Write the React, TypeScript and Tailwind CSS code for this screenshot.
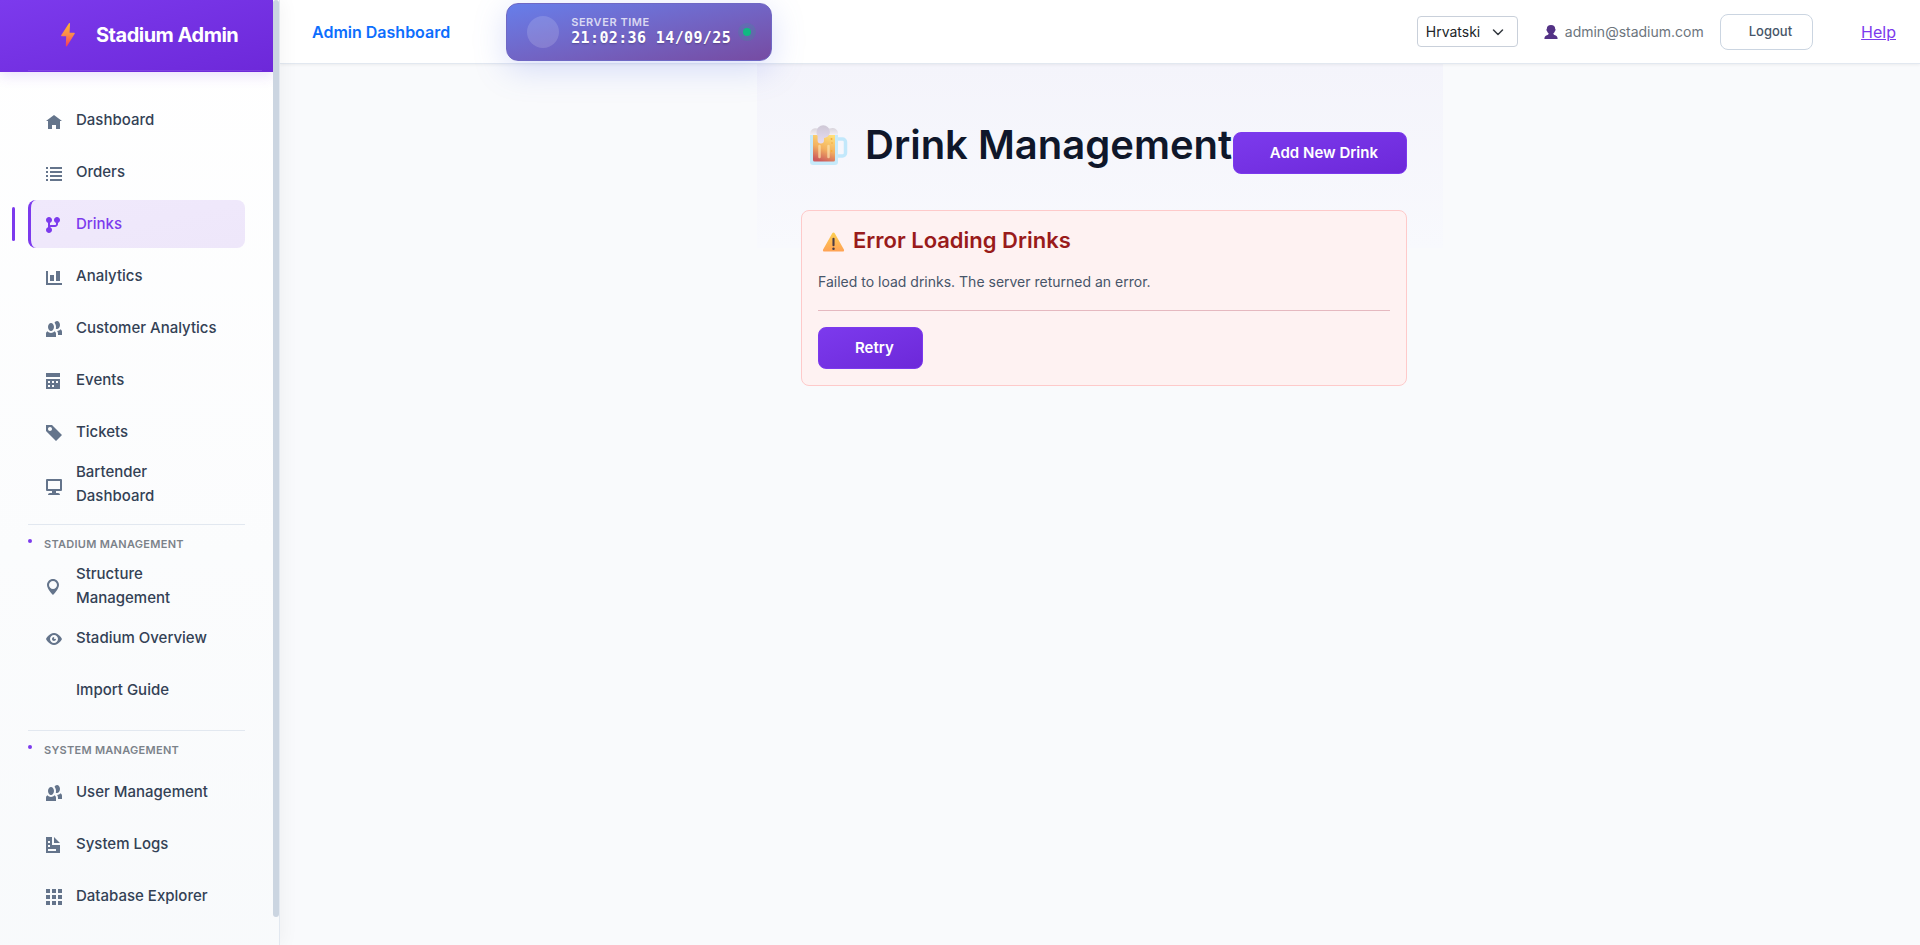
import React from "react";

const icons: Record<string, string> = {
  home: "M4 1l-4 3h1v4h2v-2h2v2h2v-4h1z",
  list: "M0 1h1v1h-1zM2 1h6v1h-6zM0 3h1v1h-1zM2 3h6v1h-6zM0 5h1v1h-1zM2 5h6v1h-6zM0 7h1v1h-1zM2 7h6v1h-6z",
  fork: "M1.500 0c-.83 0-1.500.67-1.500 1.500 0 .66.41 1.200 1 1.410v2.190c-.59.200-1 .75-1 1.410 0 .83.67 1.500 1.500 1.500s1.500-.67 1.500-1.500c0-.6-.34-1.100-.84-1.340.09-.09.210-.160.340-.160h2c.82 0 1.500-.68 1.500-1.500v-.590c.59-.2 1-.75 1-1.410 0-.83-.67-1.500-1.500-1.500s-1.500.67-1.500 1.500c0 .66.41 1.200 1 1.410v.59c0 .28-.22.500-.5.500h-2c-.17 0-.35.040-.5.090v-1.190c.59-.2 1-.75 1-1.410 0-.83-.67-1.500-1.500-1.500z",
  chart: "M0 1v7h8v-1h-7v-6zM5 1v5h2v-5zM2 3v3h2v-3z",
  people:
    "M5.500 0c-.51 0-.95.350-1.220.880.45.54.72 1.280.720 2.130 0 .29-.03.550-.09.810.19.110.380.190.59.190.83 0 1.500-.9 1.500-2s-.67-2-1.500-2zm-3 1c-.83 0-1.500.9-1.500 2s.67 2 1.500 2 1.500-.9 1.500-2-.67-2-1.500-2zm4.750 3.160c-.43.51-1.020.820-1.690.840.270.38.440.840.440 1.340v.660h2v-1.660c0-.52-.31-.970-.75-1.190zm-6.500 1c-.44.22-.75.660-.75 1.190v1.660h5v-1.660c0-.52-.31-.97-.75-1.190-.45.53-1.060.840-1.750.840s-1.300-.32-1.750-.84z",
  calendar:
    "M0 0v2h7v-2h-7zm0 3v4.910c0 .05.040.090.090.090h6.810c.05 0 .09-.04.090-.090v-4.910h-7zm1 1h1v1h-1v-1zm2 0h1v1h-1v-1zm2 0h1v1h-1v-1zm-4 2h1v1h-1v-1zm2 0h1v1h-1v-1z",
  tag: "M0 0v3l5 5 3-3-5-5h-3zm2 1c.55 0 1 .45 1 1s-.45 1-1 1-1-.45-1-1 .45-1 1-1z",
  monitor:
    "M.5 1a.5.5 0 0 0-.5.5v5a.5.5 0 0 0 .5.5h2.500v1h-1c-.55 0-1 .45-1 1h6c0-.55-.45-1-1-1h-1v-1h2.500a.5.5 0 0 0 .5-.5v-5a.5.5 0 0 0-.5-.5zM1 2h6v4h-6z",
  marker:
    "M3.500 0c-1.660 0-3 1.340-3 3 0 2 3 5 3 5s3-3 3-5c0-1.660-1.340-3-3-3zm0 1c1.110 0 2 .9 2 2 0 1.110-.89 2-2 2-1.100 0-2-.89-2-2 0-1.100.9-2 2-2z",
  eye: "M4.030 1c-2.530 0-4.030 3-4.030 3s1.500 3 4.030 3c2.470 0 3.970-3 3.970-3s-1.500-3-3.970-3zm-.03 1c1.110 0 2 .9 2 2 0 1.110-.89 2-2 2-1.100 0-2-.89-2-2 0-1.100.9-2 2-2zm0 1c-.55 0-1 .45-1 1s.45 1 1 1 1-.45 1-1c0-.1-.04-.19-.06-.28-.08.160-.24.280-.44.280-.28 0-.5-.22-.5-.5 0-.2.120-.36.280-.44-.09-.03-.18-.06-.28-.06z",
  document:
    "M0 0v8h7v-4h-4v-4h-3zm4 0v3h3l-3-3zm-3 2h1v1h-1v-1zm0 2h1v1h-1v-1zm0 2h4v1h-4v-1z",
  grid: "M0 0h2v2h-2zM3 0h2v2h-2zM6 0h2v2h-2zM0 3h2v2h-2zM3 3h2v2h-2zM6 3h2v2h-2zM0 6h2v2h-2zM3 6h2v2h-2zM6 6h2v2h-2z",
};

type Item = { label: string; icon?: string; active?: boolean };
type Section = { title?: string; items: Item[] };

const sections: Section[] = [
  {
    items: [
      { label: "Dashboard", icon: "home" },
      { label: "Orders", icon: "list" },
      { label: "Drinks", icon: "fork", active: true },
      { label: "Analytics", icon: "chart" },
      { label: "Customer Analytics", icon: "people" },
      { label: "Events", icon: "calendar" },
      { label: "Tickets", icon: "tag" },
      { label: "Bartender Dashboard", icon: "monitor" },
    ],
  },
  {
    title: "Stadium Management",
    items: [
      { label: "Structure Management", icon: "marker" },
      { label: "Stadium Overview", icon: "eye" },
      { label: "Import Guide" },
    ],
  },
  {
    title: "System Management",
    items: [
      { label: "User Management", icon: "people" },
      { label: "System Logs", icon: "document" },
      { label: "Database Explorer", icon: "grid" },
    ],
  },
];

function NavItem({ label, icon, active }: Item) {
  return (
    <li className="relative">
      {active && <span className="absolute top-[7px] -left-4 h-[34px] w-[3px] rounded-sm bg-[#7c3aed]" />}
      <a
        href="#"
        aria-current={active ? "page" : undefined}
        className={
          active
            ? "flex min-h-12 items-center gap-3.5 rounded-lg border-l-3 border-[#7c3aed] bg-linear-to-br from-[#f0e9fc] to-[#eee7fa] pr-4 pl-[15px] text-[#7c3aed]"
            : "flex min-h-12 items-center gap-3.5 rounded-lg border-l-3 border-transparent pr-4 pl-[15px] text-[#334155]"
        }
      >
        <svg
          viewBox="0 0 8 8"
          aria-hidden="true"
          className={
            active
              ? "mt-0.5 size-4 shrink-0 overflow-visible fill-[#7c3aed]"
              : "mt-0.5 size-4 shrink-0 overflow-visible fill-[#64748b]"
          }
        >
          {icon && <path d={icons[icon]} fillRule="evenodd" />}
        </svg>
        <span className="text-[15px] leading-6 font-medium">{label}</span>
      </a>
    </li>
  );
}

function Bolt() {
  return (
    <svg viewBox="0 0 16 24" className="h-6 w-4" aria-hidden="true">
      <defs>
        <linearGradient id="bolt" x1="0" y1="0" x2="0" y2="1">
          <stop offset="0" stopColor="#fdb92e" />
          <stop offset="0.5" stopColor="#fb8a4b" />
          <stop offset="1" stopColor="#f4395c" />
        </linearGradient>
      </defs>
      <path
        d="M8.800 .4L1.200 12.200c-.3.500 0 1 .5 1h4.500L5.800 22.700c0 .8.900 1 1.300.4L14.700 10.800c.3-.5 0-1-.5-1H9.600L10 .900C10.100 0 9.200-.2 8.800 .4z"
        fill="url(#bolt)"
      />
    </svg>
  );
}

function Beer() {
  return (
    <svg viewBox="0 0 40 42" className="h-[42px] w-10 shrink-0" aria-hidden="true">
      <defs>
        <linearGradient id="ale" x1="0.7" y1="0" x2="0.4" y2="1">
          <stop offset="0" stopColor="#ffe07a" />
          <stop offset="0.55" stopColor="#f3b060" />
          <stop offset="1" stopColor="#cc5a5c" />
        </linearGradient>
        <linearGradient id="foam" x1="0" y1="0" x2="0" y2="1">
          <stop offset="0" stopColor="#cfc8d6" />
          <stop offset="1" stopColor="#e6dcf2" />
        </linearGradient>
        <linearGradient id="froth" x1="0" y1="0" x2="0" y2="1">
          <stop offset="0" stopColor="#d9d4dc" />
          <stop offset="1" stopColor="#f4f0f4" />
        </linearGradient>
      </defs>
      <path d="M28 15h5.500a3 3 0 0 1 3 3v11a3 3 0 0 1-3 3H28" fill="none" stroke="#c2e8fb" strokeWidth="3.500" />
      <path d="M1 10h28v28a3 3 0 0 1-3 3H4a3 3 0 0 1-3-3z" fill="#c6eafa" />
      <path d="M4 10h22v26a1.500 1.500 0 0 1-1.500 1.500h-19A1.500 1.500 0 0 1 4 36z" fill="url(#ale)" />
      <path d="M10.500 22v11M19.500 22v11" stroke="#fde3b0" strokeWidth="2.500" strokeLinecap="round" opacity=".7" />
      <circle cx="22.500" cy="15" r="1" fill="#f3aa3c" />
      <circle cx="22.500" cy="27" r="1" fill="#f3aa3c" />
      <circle cx="23" cy="19" r=".8" fill="#f3aa3c" />
      <path d="M1 11V9.500a5.500 5.500 0 0 1 7-5h13a5.500 5.500 0 0 1 8 5V11z" fill="url(#froth)" />
      <path d="M7.500 8a6.700 6.700 0 0 1 13.400 0c0 3-2.400 5.500-5.900 6v2.200a3.200 3.200 0 0 1-6.400 0V12c-.7-1-1.100-2.500-1.100-4z" fill="url(#foam)" />
    </svg>
  );
}

function Warning() {
  return (
    <svg viewBox="0 0 24 21" className="mt-0.5 h-5 w-[23px] shrink-0" aria-hidden="true">
      <defs>
        <linearGradient id="warn" x1="0" y1="0" x2="0" y2="1">
          <stop offset="0" stopColor="#fccf52" />
          <stop offset="1" stopColor="#ffa254" />
        </linearGradient>
      </defs>
      <path
        d="M10.700 1.200a1.500 1.500 0 0 1 2.600 0l9.600 17.300a1.300 1.300 0 0 1-1.200 2H2.300a1.300 1.300 0 0 1-1.200-2z"
        fill="url(#warn)"
      />
      <rect x="10.900" y="6" width="2.200" height="9" rx="1.100" fill="#4a3b45" />
      <circle cx="12" cy="17.500" r="1.300" fill="#4a3b45" />
    </svg>
  );
}

function UserGlyph() {
  return (
    <svg viewBox="0 0 14 14" className="size-3.5" aria-hidden="true">
      <path
        d="M7 0c2.700 0 4.200 1.600 4.200 4 .6.200.5 1.700-.2 1.900-.3 1.200-1 2-1.700 2.600.1.900.7 1.400 1.800 1.700 1.600.5 2.500 1.500 2.500 3.800H.4c0-2.300.9-3.300 2.500-3.800 1.100-.3 1.700-.8 1.800-1.700C4 7.900 3.300 7.100 3 5.900c-.7-.2-.8-1.700-.2-1.900C2.800 1.600 4.300 0 7 0z"
        fill="#533285"
      />
    </svg>
  );
}

const primary =
  "flex h-[42px] items-center rounded-lg border border-[#7c3aed] bg-linear-to-br from-[#7c3aed] to-[#6d28d9] pr-7 pl-9 text-[15px] font-semibold text-white";

export default function App() {
  return (
    <div className="flex min-h-screen bg-[#f9fafc] font-['Inter',sans-serif] text-slate-900">
      <aside className="sticky top-0 z-10 flex h-screen w-[280px] shrink-0 border-r border-slate-200 bg-linear-to-b from-white to-slate-50 shadow-[4px_0_16px_rgba(0,0,0,0.04)]">
        <div className="min-w-0 flex-1 overflow-hidden">
          <div className="flex h-[72px] flex-col bg-linear-to-br from-[#7c3aed] to-[#6d28d9] pr-[11px] pl-7 shadow-[0_4px_12px_rgba(124,58,237,0.15)]">
            <a href="#" className="flex flex-1 items-center gap-5 pl-8 text-xl font-bold tracking-tight text-white">
              <Bolt />
              Stadium Admin
            </a>
            <div className="mb-px h-px bg-white/10" />
          </div>
          <nav className="px-7 pt-6">
            {sections.map((section, i) => (
              <div key={i}>
                {section.title && (
                  <div className="mt-4 flex h-[38px] gap-3 border-t border-slate-200">
                    <span className="mt-3.5 size-1 rounded-full bg-[#7c3aed]" />
                    <h2 className="pt-[11px] text-[11px] leading-4 font-semibold tracking-wide text-[#7b828a] uppercase">
                      {section.title}
                    </h2>
                  </div>
                )}
                <ul className="flex flex-col gap-1">
                  {section.items.map((item) => (
                    <NavItem key={item.label} {...item} />
                  ))}
                </ul>
              </div>
            ))}
          </nav>
        </div>
        <div className="w-1.5 shrink-0" aria-hidden="true">
          <div className="h-[97%] rounded-full bg-[#cbd5e1]" />
        </div>
      </aside>

      <div className="flex min-w-0 flex-1 flex-col">
        <header className="z-[5] flex h-16 items-center justify-between border-b border-slate-200 bg-white pr-6 pl-8 shadow-[0_1px_3px_rgba(0,0,0,0.06)]">
          <div className="flex items-center gap-14">
            <a href="#" className="text-base font-semibold text-[#0d6efd]">
              Admin Dashboard
            </a>
            <div className="flex h-[58px] items-center rounded-xl border border-[#6f68c4] bg-linear-to-br from-[#667eea] to-[#764ba2] px-5 text-white shadow-[0_8px_32px_rgba(102,126,234,0.25)]">
              <span className="size-8 rounded-full bg-white/15" />
              <div className="pb-1 pl-3">
                <div className="text-[11px] leading-4 font-semibold tracking-wider text-white/75">SERVER TIME</div>
                <div className="font-['DejaVu_Sans_Mono',monospace] text-[15px] leading-4 font-bold tracking-wide text-shadow-sm">
                  21:02:36 14/09/25
                </div>
              </div>
              <span className="ml-3 size-2 rounded-full bg-[#10b981] ring-5 ring-[#10b981]/15" />
            </div>
          </div>
          <div className="flex items-center">
            <div className="relative">
              <select
                aria-label="Language"
                className="h-[31px] w-[101px] appearance-none rounded border border-[#c9d0da] bg-white px-2 text-sm text-[#212529]"
              >
                <option>Hrvatski</option>
              </select>
              <svg
                viewBox="0 0 12 12"
                className="pointer-events-none absolute top-2.5 right-3.5 size-3"
                aria-hidden="true"
              >
                <path
                  d="M1.500 4L6 8.500 10.500 4"
                  fill="none"
                  stroke="#343a40"
                  strokeWidth="1.500"
                  strokeLinecap="round"
                  strokeLinejoin="round"
                />
              </svg>
            </div>
            <div className="ml-[26px] flex items-center gap-[7px] text-sm text-[#6c757d]">
              <UserGlyph />
              admin@stadium.com
            </div>
            <button className="ml-4 h-9 rounded-lg border border-[#cbd5e1] bg-white pr-5 pl-7 text-[13px] font-medium text-[#475569]">
              Logout
            </button>
            <a href="#" className="ml-12 text-base text-[#7c3aed] underline">
              Help
            </a>
          </div>
        </header>

        <main className="mx-auto w-full max-w-[686px] flex-1 bg-[linear-gradient(to_bottom,#f4f4fb,#f8f9fd_184px,#f9fafc_184px)] pt-14 pr-9 pl-11">
          <div className="flex items-start justify-between">
            <h1 className="flex items-center gap-4 pl-2 text-[40px] leading-[50px] font-semibold whitespace-nowrap text-[#0f172a]">
              <Beer />
              Drink Management
            </h1>
            <div className="pt-3">
              <button className={primary}>Add New Drink</button>
            </div>
          </div>
          <section className="mt-9 rounded-lg border border-[#fecaca] bg-[#fef2f2] p-4">
            <h2 className="flex items-center gap-2 pl-1 text-[22px] leading-[27px] font-semibold text-[#991b1b]">
              <Warning />
              Error Loading Drinks
            </h2>
            <p className="mt-4 text-sm leading-6 text-[#475569]">Failed to load drinks. The server returned an error.</p>
            <hr className="my-4 border-[#e5b9c0]" />
            <button className={primary}>Retry</button>
          </section>
        </main>
      </div>
    </div>
  );
}
